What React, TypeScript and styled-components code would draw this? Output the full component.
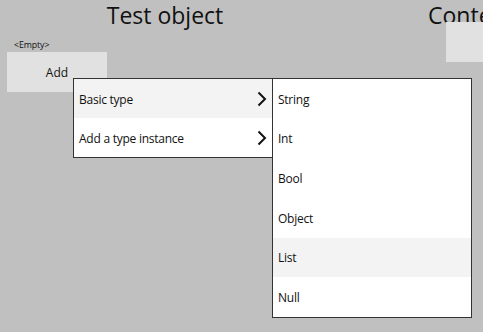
import React from "react";
import styled, { createGlobalStyle } from "styled-components";

const Global = createGlobalStyle`
  html, body { margin: 0; padding: 0; background: #c0c0c0; overflow: hidden; }
  body { font-family: "Open Sans", "Noto Sans", sans-serif; color: #111; }
`;

const Page = styled.div`
  position: relative;
  width: 483px;
  height: 332px;
  overflow: hidden;
  display: flex;
  background: #c0c0c0;
`;

const LeftPanel = styled.section`
  flex: 0 0 330px;
  display: flex;
  flex-direction: column;
`;

const RightPanel = styled.section`
  flex: 0 0 300px;
  display: flex;
  flex-direction: column;
  padding-left: 98px;
`;

const Title = styled.h1<{ $align?: string }>`
  margin: 0;
  font-weight: 400;
  font-size: 23px;
  line-height: 30px;
  height: 30px;
  text-align: ${(p) => p.$align || "center"};
  white-space: nowrap;
  color: #111;
`;

const SmallLabel = styled.div`
  font-size: 8.8px;
  letter-spacing: -0.1px;
  line-height: 11px;
  margin: 10px 0 0 14px;
  height: 12px;
`;

const GrayButton = styled.button<{ $ml: number; $mt: number; $w: number }>`
  box-sizing: border-box;
  margin: ${(p) => p.$mt}px 0 0 ${(p) => p.$ml}px;
  width: ${(p) => p.$w}px;
  height: 40px;
  border: none;
  background: #e1e1e1;
  font-family: inherit;
  font-size: 12px;
  color: #111;
  padding: 0;
`;

const Menu = styled.ul<{ $left: number; $top: number }>`
  position: absolute;
  left: ${(p) => p.$left}px;
  top: ${(p) => p.$top}px;
  box-sizing: border-box;
  width: 200px;
  margin: 0;
  padding: 0;
  list-style: none;
  background: #fff;
  border: 1px solid #333;
  display: flex;
  flex-direction: column;
`;

const Item = styled.li<{ $h: number; $active?: boolean }>`
  box-sizing: border-box;
  height: ${(p) => p.$h}px;
  display: flex;
  align-items: center;
  justify-content: space-between;
  padding: 1px 5px 0 5px;
  font-size: 12px;
  letter-spacing: -0.25px;
  color: #111;
  background: ${(p) => (p.$active ? "#f3f3f3" : "#fff")};
`;

const Chevron = () => (
  <svg width="10" height="16" viewBox="0 0 10 16">
    <path d="M1.5 1.5 L8 8 L1.5 14.5" fill="none" stroke="#111" strokeWidth="2" />
  </svg>
);

export default function App() {
  return (
    <>
      <Global />
      <Page>
        <LeftPanel>
          <Title>Test object</Title>
          <SmallLabel>&lt;Empty&gt;</SmallLabel>
          <GrayButton $ml={7} $mt={0} $w={100}>Add</GrayButton>
        </LeftPanel>
        <RightPanel>
          <Title $align="left">Content</Title>
          <GrayButton $ml={18} $mt={-8} $w={100} />
        </RightPanel>
        <Menu $left={73} $top={78}>
          <Item $h={39} $active>
            Basic type
            <Chevron />
          </Item>
          <Item $h={39}>
            Add a type instance
            <Chevron />
          </Item>
        </Menu>
        <Menu $left={272} $top={78}>
          {["String", "Int", "Bool", "Object", "List", "Null"].map((t) => (
            <Item key={t} $h={39.67} $active={t === "List"}>
              {t}
            </Item>
          ))}
        </Menu>
      </Page>
    </>
  );
}
